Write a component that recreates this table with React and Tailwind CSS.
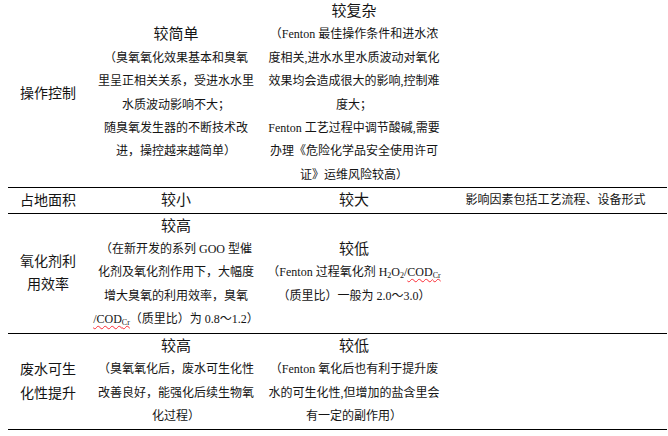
import React from "react";

const F = "font-['Liberation_Serif','Noto_Sans_CJK_SC',serif]";

function Head({ children }) {
  return <div className="text-[15px]">{children}</div>;
}

function Lines({ lines }) {
  return lines.map((l, i) => (
    <div key={i} className="whitespace-nowrap">
      {l}
    </div>
  ));
}

function Cod({ wavy = true }) {
  return (
    <span className={wavy ? "underline decoration-wavy decoration-red-500 decoration-[1px] underline-offset-2" : ""}>
      COD<sub className="text-[8px]">Cr</sub>
    </span>
  );
}

function Row({ c1, c2, c3, c4, cls }) {
  return (
    <div className={`grid grid-cols-[80px_176px_180px_223px] border-black ${cls}`}>
      <div className="flex flex-col items-center justify-center text-[14px]">{c1}</div>
      <div className="flex flex-col items-center justify-center text-[12px]">{c2}</div>
      <div className="flex flex-col items-center justify-center text-[12px]">{c3}</div>
      <div className="flex flex-col items-center justify-center text-[12px]">{c4}</div>
    </div>
  );
}

export default function App() {
  return (
    <div className={`w-[668px] h-[436px] bg-white text-[#141414] ${F} leading-[23.4px] overflow-hidden`}>
      <div className="ml-[8px] w-[659px]">
        <Row
          cls="border-b"
          c1={<div>操作控制</div>}
          c2={
            <>
              <Head>较简单</Head>
              <Lines
                lines={[
                  "（臭氧氧化效果基本和臭氧",
                  "里呈正相关关系，受进水水里",
                  "水质波动影响不大；",
                  "随臭氧发生器的不断技术改",
                  "进，操控越来越简单）",
                ]}
              />
            </>
          }
          c3={
            <>
              <Head>较复杂</Head>
              <Lines
                lines={[
                  "（Fenton 最佳操作条件和进水浓",
                  "度相关,进水水里水质波动对氧化",
                  "效果均会造成很大的影响,控制难",
                  "度大；",
                  "Fenton 工艺过程中调节酸碱,需要",
                  "办理《危险化学品安全使用许可",
                  "证》运维风险较高）",
                ]}
              />
            </>
          }
          c4={null}
        />
        <Row
          cls="border-b py-[0.5px]"
          c1={<div>占地面积</div>}
          c2={<Head>较小</Head>}
          c3={<Head>较大</Head>}
          c4={<div>影响因素包括工艺流程、设备形式</div>}
        />
        <Row
          cls="border-b py-[1px]"
          c1={
            <>
              <div>氧化剂利</div>
              <div>用效率</div>
            </>
          }
          c2={
            <>
              <Head>较高</Head>
              <Lines
                lines={[
                  "（在新开发的系列 GOO 型催",
                  "化剂及氧化剂作用下，大幅度",
                  "增大臭氧的利用效率，臭氧",
                ]}
              />
              <div className="whitespace-nowrap">
                <span className="underline decoration-wavy decoration-red-500 decoration-[1px] underline-offset-2">
                  /COD<sub className="text-[8px]">Cr</sub>
                </span>
                （质里比）为 0.8～1.2）
              </div>
            </>
          }
          c3={
            <>
              <Head>较低</Head>
              <div className="whitespace-nowrap">
                （Fenton 过程氧化剂 H<sub className="text-[8px]">2</sub>O<sub className="text-[8px]">2</sub>/
                <Cod />
              </div>
              <div className="whitespace-nowrap">（质里比）一般为 2.0～3.0）</div>
            </>
          }
          c4={null}
        />
        <Row
          cls="border-b-[1.5px] py-[1px]"
          c1={
            <>
              <div>废水可生</div>
              <div>化性提升</div>
            </>
          }
          c2={
            <>
              <Head>较高</Head>
              <Lines
                lines={[
                  "（臭氧氧化后，废水可生化性",
                  "改善良好，能强化后续生物氧",
                  "化过程）",
                ]}
              />
            </>
          }
          c3={
            <>
              <Head>较低</Head>
              <Lines
                lines={[
                  "（Fenton 氧化后也有利于提升废",
                  "水的可生化性,但增加的盐含里会",
                  "有一定的副作用）",
                ]}
              />
            </>
          }
          c4={null}
        />
      </div>
    </div>
  );
}
